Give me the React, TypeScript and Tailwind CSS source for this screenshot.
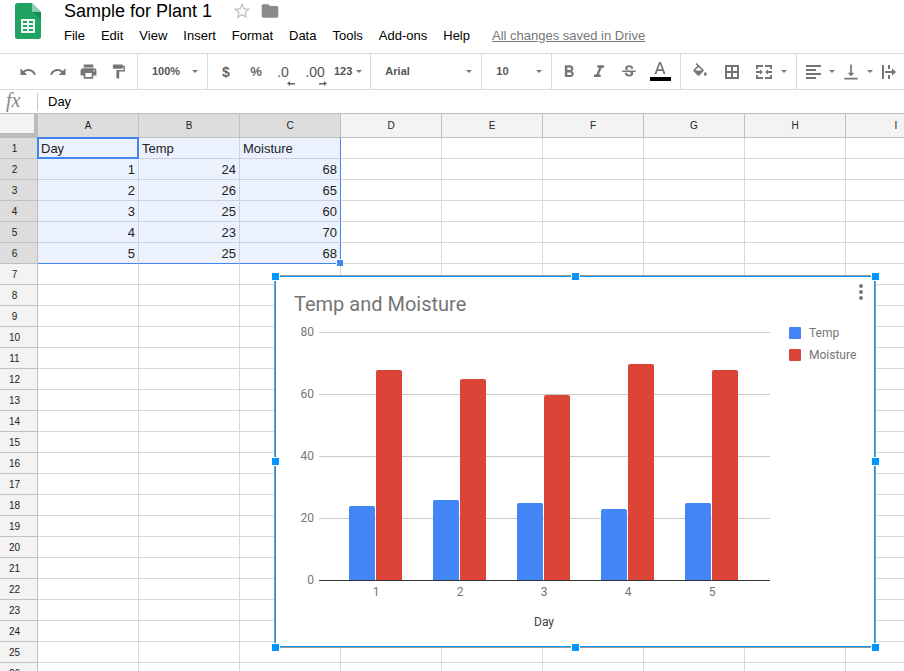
import React from "react";
import {
  MdPrint,
  MdFormatPaint,
  MdFormatBold,
  MdFormatItalic,
  MdStrikethroughS,
  MdVerticalAlignBottom,
  MdStarBorder,
  MdFolder,
} from "react-icons/md";

const MENUS = ["File", "Edit", "View", "Insert", "Format", "Data", "Tools", "Add-ons", "Help"];
const COLUMNS = ["A", "B", "C", "D", "E", "F", "G", "H", "I"];
const ROW_COUNT = 26;
const DATA: (string | number)[][] = [
  ["Day", "Temp", "Moisture"],
  [1, 24, 68],
  [2, 26, 65],
  [3, 25, 60],
  [4, 23, 70],
  [5, 25, 68],
];

function Caret({ className = "" }: { className?: string }) {
  return (
    <svg className={`h-[3px] w-[6px] shrink-0 ${className}`} viewBox="0 0 6 3" aria-hidden="true">
      <path d="M0 0h6L3 3z" fill="#777" />
    </svg>
  );
}

function UndoIcon({ className = "" }: { className?: string }) {
  return (
    <svg className={`h-[18px] w-[18px] ${className}`} viewBox="0 0 24 24" fill="currentColor" aria-hidden="true">
      <path d="M12.500 8c-2.650 0-5.050.990-6.900 2.600L2 7v9h9l-3.620-3.620c1.390-1.160 3.160-1.880 5.120-1.880 3.540 0 6.550 2.310 7.600 5.500l2.370-.780C21.080 11.030 17.150 8 12.500 8z" />
    </svg>
  );
}

function SheetsLogo() {
  return (
    <svg className="h-9 w-[26px]" viewBox="0 0 26 36" aria-hidden="true">
      <path d="M2.500 0H17l9 9v24.500a2.500 2.500 0 0 1-2.500 2.500h-21A2.500 2.500 0 0 1 0 33.500v-31A2.500 2.500 0 0 1 2.500 0z" fill="#1fa463" />
      <path d="M18 9h8v8z" fill="#188a52" />
      <path d="M17 0l9 9h-7.500A1.500 1.500 0 0 1 17 7.500z" fill="#8ed1b1" />
      <path d="M6 16h14v14H6z" fill="#f1f8f4" />
      <path d="M8 18h4v2H8zM14 18h4v2h-4zM8 22h4v2H8zM14 22h4v2h-4zM8 26h4v2H8zM14 26h4v2h-4z" fill="#1fa463" />
    </svg>
  );
}

function ToolButton({ label, children, wide = false }: { label: string; children: React.ReactNode; wide?: boolean }) {
  return (
    <button
      type="button"
      aria-label={label}
      className={`flex h-[30px] shrink-0 items-center justify-center text-[#757575] ${wide ? "w-8" : "w-[30px]"}`}
    >
      {children}
    </button>
  );
}

function Group({ className = "", children }: { className?: string; children: React.ReactNode }) {
  return <div className={`flex h-full shrink-0 items-center border-r border-[#dadada] ${className}`}>{children}</div>;
}

function Picker({ label, value, className }: { label: string; value: string; className: string }) {
  return (
    <label className={`relative flex h-full items-center ${className}`}>
      <select
        aria-label={label}
        defaultValue={value}
        className="h-full w-full appearance-none bg-transparent pl-[14px] text-[11px] font-bold text-[#555] outline-none"
      >
        <option>{value}</option>
      </select>
      <Caret className="pointer-events-none absolute right-[9px]" />
    </label>
  );
}

function Toolbar() {
  return (
    <div className="flex h-[37px] shrink-0 items-center overflow-hidden border-y border-[#dadada]">
      <Group className="pr-1 pl-[13px]">
        <ToolButton label="Undo"><UndoIcon /></ToolButton>
        <ToolButton label="Redo"><UndoIcon className="-scale-x-100" /></ToolButton>
        <ToolButton label="Print"><MdPrint size={19} /></ToolButton>
        <ToolButton label="Paint format"><MdFormatPaint size={17} /></ToolButton>
      </Group>
      <Group><Picker label="Zoom" value="100%" className="w-[69px]" /></Group>
      <Group className="pr-2 pl-[3px]">
        <ToolButton label="Format as currency"><span className="text-sm font-bold text-[#666]">$</span></ToolButton>
        <ToolButton label="Format as percent"><span className="text-[13px] font-bold text-[#666]">%</span></ToolButton>
        <ToolButton label="Decrease decimal places">
          <span className="relative pr-[6px] text-sm text-[#555]">
            .0
            <svg className="absolute right-0 -bottom-1 h-[5px] w-2" viewBox="0 0 8 5"><path d="M0 2.500L3 0v2h5v1.500H3V5z" fill="#666" /></svg>
          </span>
        </ToolButton>
        <ToolButton label="Increase decimal places">
          <span className="relative pr-[2px] text-sm text-[#555]">
            .00
            <svg className="absolute right-0 -bottom-1 h-[5px] w-2" viewBox="0 0 8 5"><path d="M8 2.500L5 0v2H0v1.500h5V5z" fill="#666" /></svg>
          </span>
        </ToolButton>
        <button type="button" aria-label="More formats" className="flex items-center gap-1 pl-[3px] text-[11px] font-bold text-[#555]">
          123 <Caret />
        </button>
      </Group>
      <Group><Picker label="Font" value="Arial" className="w-[110px]" /></Group>
      <Group><Picker label="Font size" value="10" className="w-[69px]" /></Group>
      <Group className="pr-1 pl-[2px]">
        <ToolButton label="Bold"><MdFormatBold size={20} /></ToolButton>
        <ToolButton label="Italic"><MdFormatItalic size={20} /></ToolButton>
        <ToolButton label="Strikethrough"><MdStrikethroughS size={18} /></ToolButton>
        <ToolButton label="Text color" wide>
          <span className="flex w-[21px] flex-col items-center">
            <svg className="h-[15px] w-3" viewBox="0 0 12 15"><path d="M5 0L0.500 12h2l1-3h5l1 3h2L7 0zM4.100 7.300L6 2l1.900 5.300z" fill="#757575" /></svg>
            <span className="h-1 w-full bg-black" />
          </span>
        </ToolButton>
      </Group>
      <Group className="pr-2 pl-[3px]">
        <ToolButton label="Fill color" wide>
          <svg className="h-[18px] w-[18px]" viewBox="0 0 24 24" fill="currentColor">
            <path d="M16.560 8.940L7.620 0 6.210 1.410l2.380 2.380-5.150 5.150c-.590.590-.590 1.540 0 2.120l5.500 5.500c.290.290.680.440 1.060.440s.770-.150 1.060-.440l5.500-5.500c.590-.580.590-1.530 0-2.120zM5.210 10L10 5.210 14.790 10H5.210zM19 11.500s-2 2.170-2 3.500c0 1.100.900 2 2 2s2-.900 2-2c0-1.330-2-3.500-2-3.500z" />
          </svg>
        </ToolButton>
        <ToolButton label="Borders" wide>
          <svg className="h-[14px] w-[14px]" viewBox="0 0 14 14" fill="none" stroke="currentColor" strokeWidth="2">
            <path d="M1 1h12v12H1zM7 1v12M1 7h12" />
          </svg>
        </ToolButton>
        <ToolButton label="Merge cells" wide>
          <svg className="h-[14px] w-4" viewBox="0 0 16 14" fill="none" stroke="#757575" strokeWidth="2">
            <path d="M1 4V1h6M9 1h6v3M1 10v3h6M9 13h6v-3" />
            <path d="M0 7h5M16 7h-5" />
            <path d="M4 4.500L7 7l-3 2.500zM12 4.500L9 7l3 2.500z" fill="#757575" stroke="none" />
          </svg>
        </ToolButton>
        <Caret className="mx-px" />
      </Group>
      <div className="flex h-full items-center">
        <ToolButton label="Horizontal align" wide>
          <svg className="h-[14px] w-[15px]" viewBox="0 0 15 14" fill="currentColor">
            <path d="M0 0h15v2H0zM0 4h10v2H0zM0 8h15v2H0zM0 12h10v2H0z" />
          </svg>
        </ToolButton>
        <Caret />
        <ToolButton label="Vertical align" wide><MdVerticalAlignBottom size={20} /></ToolButton>
        <Caret />
        <ToolButton label="Text wrapping" wide>
          <svg className="h-[14px] w-4" viewBox="0 0 16 14" fill="none" stroke="#757575" strokeWidth="2">
            <path d="M2 0v14M8 0v4M8 10v4M4 7h8" />
            <path d="M11 3.500L15 7l-4 3.500z" fill="#757575" stroke="none" />
          </svg>
        </ToolButton>
      </div>
    </div>
  );
}

function Cell({ row, col }: { row: number; col: number }) {
  const value = DATA[row]?.[col];
  const selected = row < 6 && col < 3;
  const right = selected && col === 2 ? "border-r-[#4285f4]" : selected ? "border-r-[#cbd1de]" : "border-r-[#d9d9d9]";
  const bottom = selected && row === 5 ? "border-b-[#4285f4]" : selected ? "border-b-[#cbd1de]" : "border-b-[#d9d9d9]";
  return (
    <td
      className={`relative h-[21px] border-r border-b px-[3px] pt-[2px] pb-0 text-[13px] leading-[18px] text-[#222] ${right} ${bottom} ${
        selected ? "bg-[#ebf2fe]" : "bg-white"
      } ${typeof value === "number" ? "text-right" : "text-left"}`}
    >
      {value}
      {row === 0 && col === 0 && <span className="absolute -inset-px z-10 border-2 border-[#4285f4]" />}
      {row === 5 && col === 2 && (
        <span className="absolute -right-[3px] -bottom-[3px] z-10 h-[7px] w-[7px] border-t border-l border-white bg-[#4285f4]" />
      )}
    </td>
  );
}

function Grid() {
  return (
    <table className="w-[947px] table-fixed border-separate border-spacing-0">
      <colgroup>
        <col className="w-[38px]" />
        {COLUMNS.map((c) => <col key={c} className="w-[101px]" />)}
      </colgroup>
      <thead>
        <tr>
          <th className="h-6 border-r-4 border-b-[5px] border-[#bcbcbc] bg-[#f3f3f3] p-0" aria-label="Select all" />
          {COLUMNS.map((c, i) => (
            <th
              key={c}
              scope="col"
              className={`h-6 border-r border-b border-[#c0c0c0] p-0 text-[10px] leading-4 font-normal text-[#222] ${i < 3 ? "bg-[#dddddd]" : "bg-[#f3f3f3]"}`}
            >
              {c}
            </th>
          ))}
        </tr>
      </thead>
      <tbody>
        {Array.from({ length: ROW_COUNT }, (_, r) => (
          <tr key={r}>
            <th
              scope="row"
              className={`h-[21px] border-r border-b border-[#c0c0c0] pt-[2px] pr-2 pb-0 pl-0 text-[10px] leading-[18px] font-normal text-[#222] ${r < 6 ? "bg-[#dddddd]" : "bg-[#f3f3f3]"}`}
            >
              {r + 1}
            </th>
            {COLUMNS.map((c, i) => <Cell key={c} row={r} col={i} />)}
          </tr>
        ))}
      </tbody>
    </table>
  );
}

const BASE_Y = 303;
const UNIT = 3.1;

function bar(x: number, value: number) {
  const top = Math.floor(BASE_Y - value * UNIT) + 1;
  return `M${x} ${BASE_Y}V${top + 2}q0 -2 2 -2h22q2 0 2 2V${BASE_Y}z`;
}

function ChartDrawing() {
  return (
    <svg className="block h-[369px] w-[598px] font-[Roboto,sans-serif]" viewBox="0 0 598 369" role="img" aria-label="Temp and Moisture">
      <text x="18" y="34" fontSize="20" fill="#757575">Temp and Moisture</text>
      {[80, 60, 40, 20, 0].map((v) => (
        <g key={v}>
          {v > 0 && <rect x="43" y={BASE_Y - v * UNIT} width="451" height="1" fill="#ccc" />}
          <text x="38" y={BASE_Y - v * UNIT + 4} fontSize="12" textAnchor="end" fill="#757575">{v}</text>
        </g>
      ))}
      {DATA.slice(1).map(([day, temp, moisture], i) => (
        <g key={day}>
          <path d={bar(73 + 84 * i, Number(temp))} fill="#4285f4" />
          <path d={bar(100 + 84 * i, Number(moisture))} fill="#db4437" />
          <text x={100 + 84 * i} y="319" fontSize="12" textAnchor="middle" fill="#757575">{day}</text>
        </g>
      ))}
      <rect x="43" y={BASE_Y} width="451" height="1" fill="#333" />
      <text x="268" y="349" fontSize="12" textAnchor="middle" fill="#424242">Day</text>
      <rect x="513" y="50" width="12" height="12" rx="1" fill="#4285f4" />
      <text x="533" y="60" fontSize="12" fill="#757575">Temp</text>
      <rect x="513" y="72" width="12" height="12" rx="1" fill="#db4437" />
      <text x="533" y="82" fontSize="12" fill="#757575">Moisture</text>
    </svg>
  );
}

const HANDLES = [
  "-left-1 -top-1",
  "left-1/2 -ml-1 -top-1",
  "-right-[5px] -top-1",
  "-left-1 top-1/2 -mt-[5px]",
  "-right-[5px] top-1/2 -mt-[5px]",
  "-left-1 -bottom-[5px]",
  "left-1/2 -ml-1 -bottom-[5px]",
  "-right-[5px] -bottom-[5px]",
];

function FloatingChart() {
  return (
    <div className="absolute top-[161px] left-[274px] z-20 border border-[#999] bg-white">
      <div className="border border-[#0096ff]">
        <ChartDrawing />
      </div>
      <button type="button" aria-label="Chart options" className="absolute top-2 right-[9px] flex h-4 w-[10px] justify-center">
        <svg className="h-4 w-1" viewBox="0 0 4 16" fill="#757575">
          <circle cx="2" cy="2" r="2" /><circle cx="2" cy="8" r="2" /><circle cx="2" cy="14" r="2" />
        </svg>
      </button>
      {HANDLES.map((h) => (
        <span key={h} className={`absolute h-[9px] w-[9px] border border-white bg-[#0096ff] ${h}`} />
      ))}
    </div>
  );
}

export default function App() {
  return (
    <div className="flex h-screen flex-col overflow-hidden bg-white font-['Liberation_Sans',Arial,sans-serif] text-black">
      <header className="flex h-[53px] shrink-0 items-start pl-[15px]">
        <a href="#home" aria-label="Sheets home" className="pt-[3px]"><SheetsLogo /></a>
        <div className="pl-[15px]">
          <div className="flex h-[22px] items-center pl-2">
            <h1 className="text-lg leading-[22px]">Sample for Plant 1</h1>
            <button type="button" aria-label="Star" className="ml-5 text-[#c4c4c4]"><MdStarBorder size={20} /></button>
            <button type="button" aria-label="Move to folder" className="ml-2 text-[#8a8a8a]"><MdFolder size={20} /></button>
          </div>
          <nav className="flex h-7 items-center text-[13px] leading-4">
            {MENUS.map((m) => <button key={m} type="button" className="px-2">{m}</button>)}
            <a href="#history" className="ml-[14px] text-[#777] underline">All changes saved in Drive</a>
          </nav>
        </div>
      </header>
      <Toolbar />
      <div className="flex h-6 shrink-0 items-center border-b border-[#c0c0c0]">
        <label htmlFor="formula" className="w-[37px] pb-1 pl-[6px] font-['Liberation_Serif',serif] text-xl leading-5 text-[#888] italic">fx</label>
        <input
          id="formula"
          type="text"
          defaultValue="Day"
          className="h-[18px] min-w-0 flex-1 border-l border-[#c8c8c8] pl-[10px] text-[13px] text-black outline-none"
        />
      </div>
      <main className="relative min-h-0 flex-1 overflow-hidden">
        <Grid />
        <FloatingChart />
      </main>
    </div>
  );
}
